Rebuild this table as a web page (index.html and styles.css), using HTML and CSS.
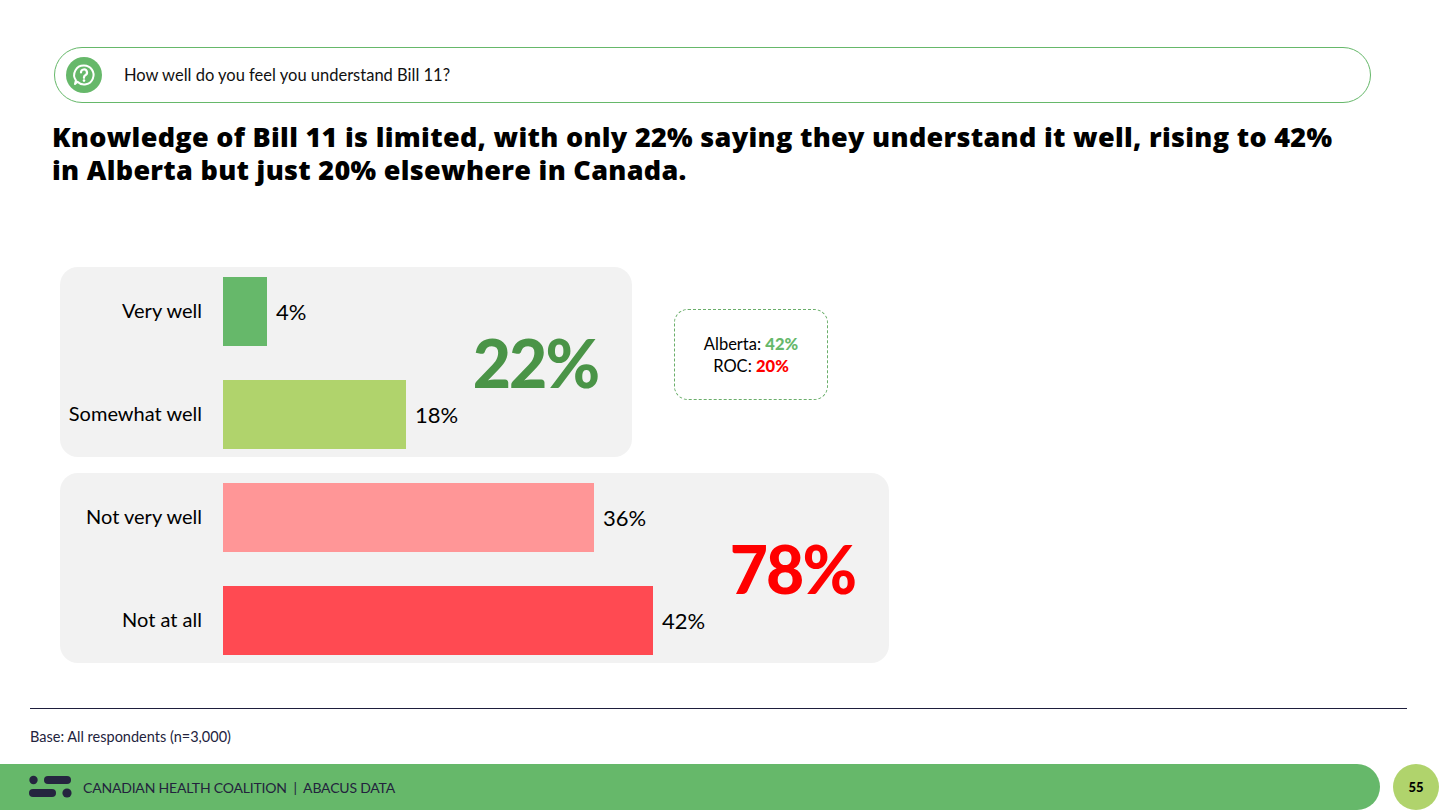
FILE: index.html
```html
<!DOCTYPE html>
<html lang="en">
<head>
<meta charset="utf-8">
<title>Bill 11 knowledge</title>
<link rel="stylesheet" href="styles.css">
</head>
<body>
<div class="slide">
  <header class="question">
    <span class="q-icon">
      <svg width="36" height="36" viewBox="0 0 36 36">
        <circle cx="18" cy="18" r="18" fill="#66b86a"/>
        <path d="M18 8.5a9.5 9.5 0 1 1-6.6 16.3L9 27l.9-3.6A9.5 9.5 0 0 1 18 8.5z" fill="none" stroke="#fff" stroke-width="2" stroke-linejoin="round"/>
        <path d="M15 15.5a3 3 0 1 1 4.3 2.7c-.9.5-1.3 1-1.3 2v.6" fill="none" stroke="#fff" stroke-width="2.2" stroke-linecap="round"/>
        <circle cx="18" cy="23.6" r="1.3" fill="#fff"/>
      </svg>
    </span>
    <span class="q-text">How well do you feel you understand Bill 11?</span>
  </header>

  <h1 class="title"><span class="tl">Knowledge of Bill 11 is limited, with only 22% saying they understand it well, rising to 42%</span><span class="tl">in Alberta but just 20% elsewhere in Canada.</span></h1>

  <section class="chart">
    <div class="chart-row">
      <div class="panel panel-well">
        <div class="bars">
          <div class="bar-row">
            <span class="label">Very well</span>
            <span class="bar bar-very" style="width:44px"></span>
            <span class="value">4%</span>
          </div>
          <div class="bar-row">
            <span class="label">Somewhat well</span>
            <span class="bar bar-some" style="width:183px"></span>
            <span class="value">18%</span>
          </div>
        </div>
        <span class="big big-green">22%</span>
      </div>
      <div class="callout">
        <div>Alberta: <b class="g">42%</b></div>
        <div>ROC: <b class="r">20%</b></div>
      </div>
    </div>
    <div class="chart-row">
      <div class="panel panel-not">
        <div class="bars">
          <div class="bar-row">
            <span class="label">Not very well</span>
            <span class="bar bar-notvery" style="width:371px"></span>
            <span class="value">36%</span>
          </div>
          <div class="bar-row">
            <span class="label">Not at all</span>
            <span class="bar bar-notall" style="width:430px"></span>
            <span class="value">42%</span>
          </div>
        </div>
        <span class="big big-red">78%</span>
      </div>
    </div>
  </section>

  <div class="rule"></div>
  <p class="base">Base: All respondents (n=3,000)</p>

  <footer class="footer">
    <div class="brand">
      <svg class="logo" width="46" height="24" viewBox="0 0 46 24">
        <circle cx="5.5" cy="5" r="4.2" fill="#25253f"/>
        <rect x="16" y="1" width="27" height="8" rx="4" fill="#25253f"/>
        <rect x="1" y="14" width="27" height="8" rx="4" fill="#25253f"/>
        <circle cx="39" cy="18" r="4.6" fill="#25253f"/>
      </svg>
      <span class="brand-text">CANADIAN HEALTH COALITION &nbsp;|&nbsp; ABACUS DATA</span>
    </div>
    <div class="page">55</div>
  </footer>
</div>
</body>
</html>
```

FILE: styles.css
```css
* { box-sizing: border-box; }
html, body { margin: 0; padding: 0; }
body {
  width: 1440px;
  height: 810px;
  overflow: hidden;
  background: #fff;
  font-family: "Lato", "Noto Sans", sans-serif;
  color: #000;
}
.slide {
  width: 1440px;
  height: 810px;
  display: flex;
  flex-direction: column;
}
.question {
  margin: 47px 0 0 54px;
  width: 1317px;
  height: 56px;
  border: 1px solid #66b86a;
  border-radius: 28px;
  display: flex;
  align-items: center;
}
.q-icon {
  display: flex;
  margin-left: 11px;
}
.q-text {
  margin-left: 22px;
  font-size: 16.5px;
  color: #111;
}
.title {
  margin: 17px 0 0 52px;
  font-family: "Open Sans", "Lato", sans-serif;
  font-size: 27px;
  font-weight: 800;
  letter-spacing: 0.3px;
  display: flex;
  flex-direction: column;
}
.tl {
  display: block;
  height: 33px;
  line-height: 33px;
}
.chart {
  margin: 81px 0 0 60px;
  display: flex;
  flex-direction: column;
  gap: 16px;
}
.chart-row {
  display: flex;
  align-items: flex-start;
}
.panel {
  height: 190px;
  background: #f2f2f2;
  border-radius: 18px;
  padding: 10px 34px 8px 0;
  display: flex;
  align-items: center;
  justify-content: space-between;
}
.panel-well { width: 572px; }
.panel-not { width: 829px; }
.bars {
  display: flex;
  flex-direction: column;
  gap: 34px;
  align-self: flex-start;
}
.bar-row {
  display: flex;
  align-items: center;
  height: 69px;
}
.label {
  width: 142px;
  text-align: right;
  font-size: 20px;
  margin-right: 21px;
  position: relative;
  top: -2px;
}
.bar { height: 69px; display: block; }
.bar-very { background: #66b86a; }
.bar-some { background: #b0d36c; }
.bar-notvery { background: #ff9697; }
.bar-notall { background: #ff4a52; }
.value {
  margin-left: 9px;
  font-size: 22px;
}
.big {
  font-size: 66px;
  font-weight: 900;
  letter-spacing: -2px;
  line-height: 1;
}
.big-green { color: #4a9447; }
.big-red { color: #ff0000; }
.callout {
  margin: 42px 0 0 42px;
  width: 154px;
  height: 91px;
  border: 1.5px dashed #6aae6a;
  border-radius: 14px;
  display: flex;
  flex-direction: column;
  justify-content: center;
  align-items: center;
  font-size: 16.5px;
  line-height: 22px;
}
.callout b { font-weight: 900; }
.g { color: #66b86a; }
.r { color: #ff0000; }
.rule {
  margin: 45px 0 0 30px;
  width: 1377px;
  height: 1px;
  background: #1e1e3c;
}
.base {
  margin: 19px 0 0 30px;
  font-size: 14.5px;
  line-height: 18px;
  color: #23233d;
}
.footer {
  margin-top: auto;
  height: 46px;
  display: flex;
  align-items: center;
}
.brand {
  width: 1380px;
  height: 46px;
  background: #66b86a;
  border-radius: 0 23px 23px 0;
  display: flex;
  align-items: center;
  padding-left: 28px;
}
.brand-text {
  margin-left: 9px;
  font-size: 14px;
  color: #23233d;
  letter-spacing: -0.2px;
}
.page {
  margin-left: 13px;
  width: 46px;
  height: 46px;
  border-radius: 50%;
  background: #b0d36c;
  display: flex;
  align-items: center;
  justify-content: center;
  font-size: 13px;
  font-weight: 900;
}
```
